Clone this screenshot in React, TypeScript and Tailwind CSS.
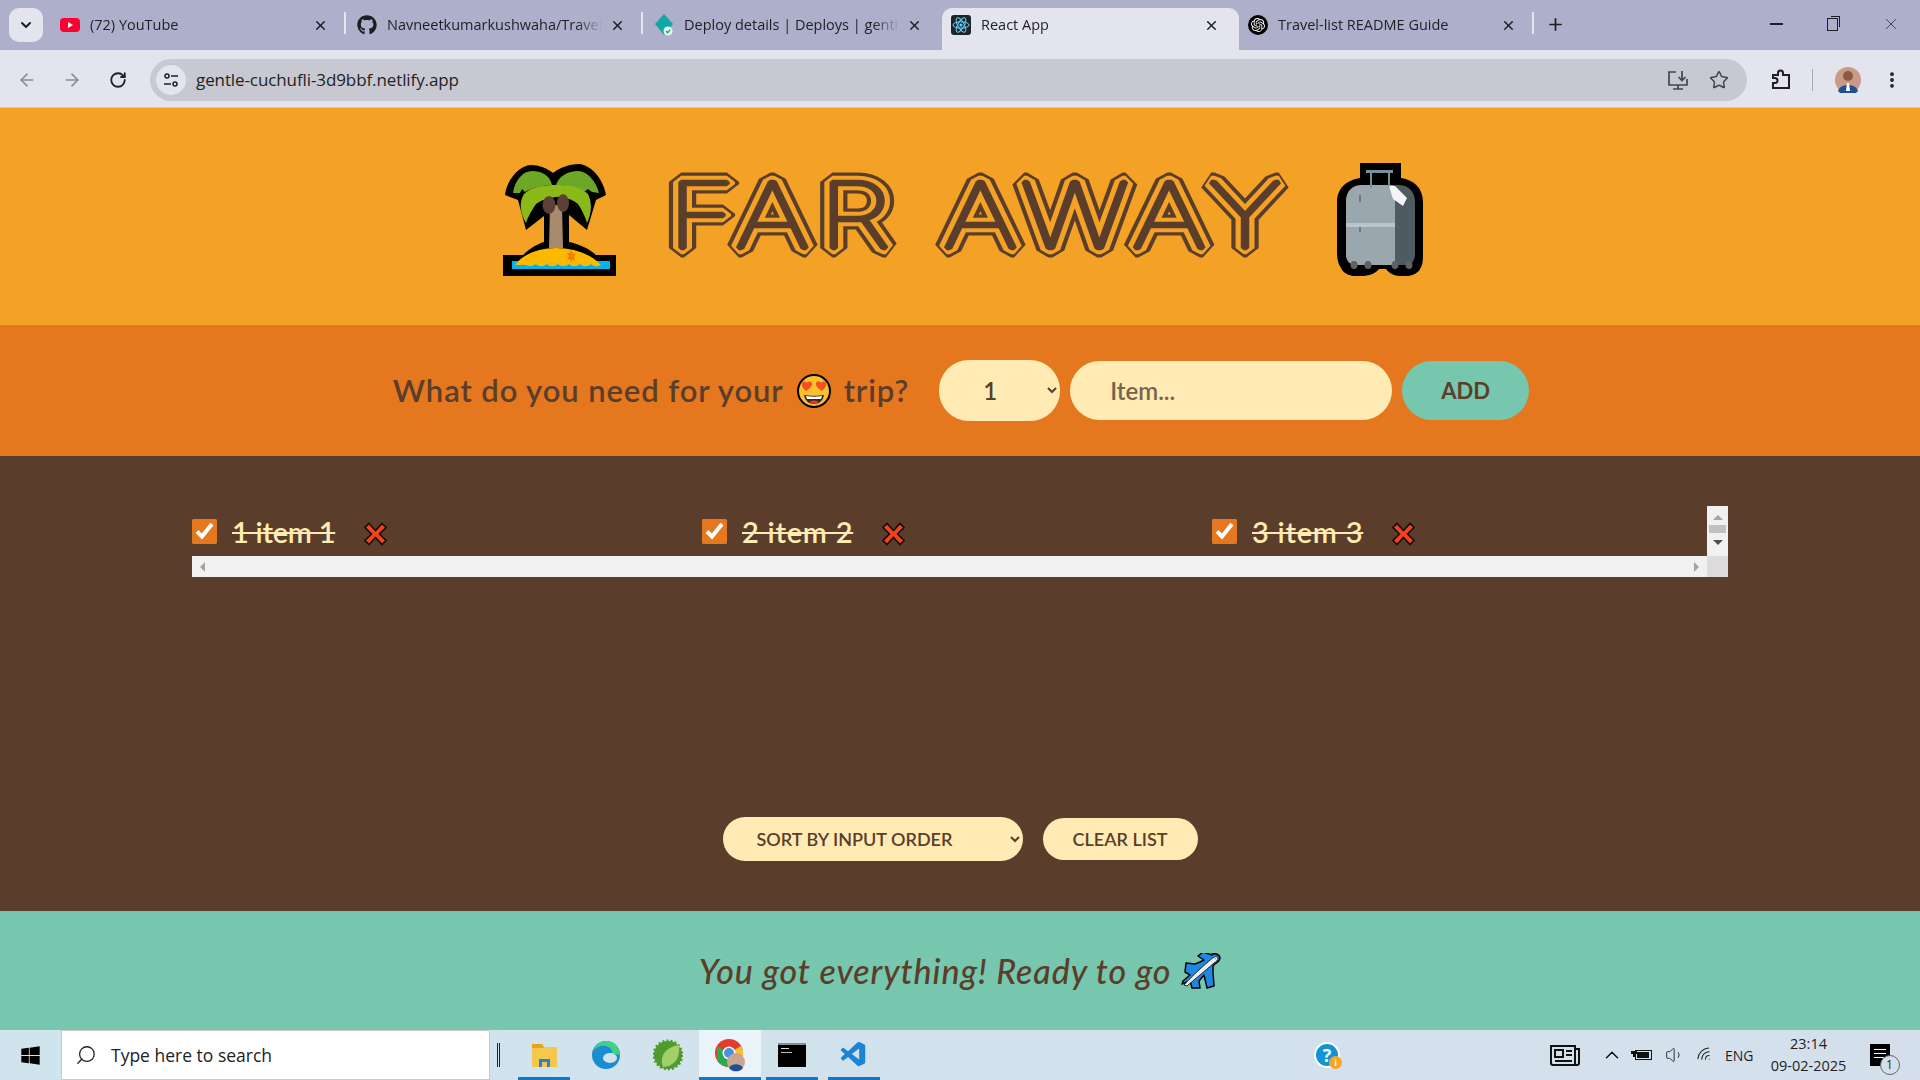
import { ReactNode } from 'react';
import { ArrowLeft, ArrowRight, ChevronDown, ChevronUp, EllipsisVertical, Plus, RotateCw, Search, Star, Volume1, Wifi, X } from 'lucide-react';
import { FaGithub, FaWindows } from 'react-icons/fa';
import { SiOpenai } from 'react-icons/si';
import { VscVscode } from 'react-icons/vsc';

const YoutubeIcon = () => (
  <svg width="20" height="20" viewBox="0 0 20 20">
    <rect y="3" width="20" height="14" rx="4" fill="#ff0033" />
    <path d="M8 7l5 3-5 3z" fill="#fff" />
  </svg>
);

const NetlifyIcon = () => (
  <svg width="20" height="24" viewBox="0 0 20 24">
    <path d="M10 1l9 10-9 11-9-11z" fill="#14a6a0" />
    <circle cx="14" cy="18" r="4.5" fill="#e3f5ee" />
    <path d="M12 18l1.6 1.6 2.6-3" fill="none" stroke="#2ca35c" strokeWidth="1.4" />
  </svg>
);

const ReactIcon = () => (
  <svg width="20" height="20" viewBox="0 0 20 20">
    <rect width="20" height="20" rx="3" fill="#20232a" />
    <g fill="none" stroke="#61dafb" strokeWidth="1">
      <ellipse cx="10" cy="10" rx="8" ry="3.2" />
      <ellipse cx="10" cy="10" rx="8" ry="3.2" transform="rotate(60 10 10)" />
      <ellipse cx="10" cy="10" rx="8" ry="3.2" transform="rotate(120 10 10)" />
    </g>
    <circle cx="10" cy="10" r="1.6" fill="#61dafb" />
  </svg>
);

const GptIcon = () => (
  <span className="flex h-5 w-5 items-center justify-center rounded-full bg-black text-white">
    <SiOpenai size={14} />
  </span>
);

const Tab = ({ icon, title, active, sep }: { icon: ReactNode; title: string; active?: boolean; sep?: boolean }) => (
  <div className={`relative flex h-[42px] w-[297px] shrink-0 items-center pb-[8px] pl-[9px] pr-[20px] ${active ? 'rounded-t-[10px] bg-[#e3e4ee]' : ''}`}>
    <span className="flex w-5 shrink-0 justify-center">{icon}</span>
    <span className="ml-[10px] flex-1 overflow-hidden whitespace-nowrap text-[14.5px] text-[#1f1f24] [mask-image:linear-gradient(to_right,black_88%,transparent)]">{title}</span>
    <X size={15} strokeWidth={2.4} className="ml-2 shrink-0 text-[#1f1f24]" />
    {sep && <span className="absolute right-[2px] top-[4px] h-[22px] w-[2px] bg-[#e3e4ee]" />}
  </div>
);

const ChromeBar = () => (
  <div className="font-['Open_Sans',sans-serif]">
    <div className="flex h-[50px] items-end bg-[#aeb0cb]">
      <div className="mb-2 ml-[9px] mr-[8px] flex h-[34px] w-[34px] items-center justify-center rounded-[10px] bg-[#e3e4ee]">
        <ChevronDown size={16} strokeWidth={3} className="text-[#1f1f24]" />
      </div>
      <Tab icon={<YoutubeIcon />} title="(72) YouTube" sep />
      <Tab icon={<FaGithub size={20} className="text-[#1b1f24]" />} title="Navneetkumarkushwaha/Travel-list" sep />
      <Tab icon={<NetlifyIcon />} title="Deploy details | Deploys | gentle-cuchufli" />
      <Tab icon={<ReactIcon />} title="React App" active />
      <Tab icon={<GptIcon />} title="Travel-list README Guide" sep />
      <Plus size={19} strokeWidth={2.2} className="mb-[16px] ml-[10px] text-[#1f1f24]" />
      <div className="mb-[17px] ml-auto flex items-center text-[#1f1f24]">
        <span className="mr-[44px] h-[1.5px] w-[13px] bg-[#1f1f24]" />
        <span className="relative mr-[44px] h-[13px] w-[11px] border border-[#1f1f24]">
          <span className="absolute -right-[3px] -top-[3px] h-[11px] w-[9px] border-r border-t border-[#1f1f24]" />
        </span>
        <X size={18} strokeWidth={1} className="mr-[20px]" />
      </div>
    </div>
    <div className="flex h-[58px] items-center border-b border-[#c9cad4] bg-[#e3e4ee] pt-[2px]">
      <ArrowLeft size={20} strokeWidth={2} className="ml-[17px] text-[#8a8b93]" />
      <ArrowRight size={20} strokeWidth={2} className="ml-[25px] text-[#8a8b93]" />
      <RotateCw size={18} strokeWidth={2.4} className="ml-[27px] text-[#1f1f24]" />
      <div className="ml-[23px] flex h-[42px] w-[1597px] items-center rounded-full bg-[#c7c8d2] pl-[6px] pr-[18px]">
        <span className="flex h-[30px] w-[30px] items-center justify-center rounded-full bg-[#e3e4ee]">
          <svg width="16" height="16" viewBox="0 0 16 16" fill="none" stroke="#1f1f24" strokeWidth="1.5">
            <circle cx="4" cy="4" r="2" />
            <path d="M8 4h7M1 12h7" />
            <circle cx="12" cy="12" r="2" />
          </svg>
        </span>
        <span className="ml-[10px] text-[17px] tracking-[-0.1px] text-[#1f1f24]">gentle-cuchufli-3d9bbf.netlify.app</span>
        <svg className="ml-auto" width="24" height="24" viewBox="0 0 24 24" fill="none" stroke="#44454c" strokeWidth="1.7">
          <path d="M10 4H3v13h18v-6M7 21h10M12 17v4" />
          <path d="M16 3v9M12.5 9l3.5 3.5L19.5 9" />
        </svg>
        <Star size={20} strokeWidth={1.8} className="ml-[19px] text-[#44454c]" />
      </div>
      <svg className="ml-[22px]" width="24" height="24" viewBox="0 0 24 24" fill="none" stroke="#1f1f24" strokeWidth="2">
        <path d="M4 7h5V5a2.5 2.5 0 015 0v2h6v13H4v-5h2a2.5 2.5 0 000-5H4z" />
      </svg>
      <span className="ml-[19px] h-[22px] w-[1px] bg-[#a9aab5]" />
      <svg className="ml-[22px]" width="26" height="26" viewBox="0 0 26 26">
        <circle cx="13" cy="13" r="13" fill="#c99b86" />
        <circle cx="13" cy="9" r="5" fill="#8a5a45" />
        <path d="M3 24c2-8 18-8 20 0a13 13 0 01-20 0z" fill="#1f4f96" />
        <path d="M12 16h2l1 8h-4z" fill="#fff" />
      </svg>
      <EllipsisVertical size={20} strokeWidth={2.6} className="ml-[21px] text-[#1f1f24]" />
    </div>
  </div>
);

const PalmIcon = () => (
  <svg width="113" height="113" viewBox="0 0 113 113" className="shrink-0">
    <path d="M0 113V92h20c8-8 15-11 21-13V53l-18 14-8-30-13-5C4 15 18 2 28 2c8 0 16 3 22 8 6-5 16-9 26-9 12 1 24 14 27 31l-10 5-9 30-18-15v27c10 2 19 6 27 13h20v21z" fill="#000" />
    <path d="M9 98h98v8H9z" fill="#00b4ef" />
    <path d="M12 102c8-11 24-17 41-17 18 0 35 6 45 17-4 2-7 2-10-1-4 3-8 3-11 0-4 3-8 3-11 0-4 3-8 3-11 0-4 3-8 3-11 0-4 3-8 3-11 0-3 2-6 3-10 1z" fill="#fcb900" />
    <path d="M47 42h12l1 43H46z" fill="#a88a6f" />
    <path d="M10 30C12 17 20 8 29 8c9 0 18 4 20 14-10 0-20 3-27 7l-3-3-2 4zM53 22c3-9 12-14 22-14 9 0 18 10 21 22l-7-1-4-3-4 3c-7-4-18-7-28-7z" fill="#6ca727" />
    <path d="M23 60c-6-10-7-21-2-29 6-6 17-9 29-9h6c12 0 23 3 29 9 4 8 4 19-1 29-2-7-5-13-9-19-6-5-14-7-20-7s-15 2-22 7c-4 6-8 12-10 19z" fill="#8bb919" />
    <ellipse cx="46" cy="42" rx="6.500" ry="9" fill="#5d4037" />
    <ellipse cx="60" cy="40" rx="6" ry="9" fill="#5d4037" />
    <path d="M68 87l2 4 3-1-2 4 1 4-3-2-1 4-1-4-3 1 2-4-2-3 3 0z" fill="#f57c00" />
  </svg>
);

const LuggageIcon = () => (
  <svg width="86" height="113" viewBox="0 0 86 113" className="shrink-0">
    <path d="M23 0h41v15c13 2 22 10 22 24v50c0 7 0 13-3 17-3 6-12 8-20 7-6 0-11-3-14-7h-7c-4 5-11 7-17 7-9 1-18-1-21-8-3-4-4-10-4-16V39C0 25 10 17 23 15z" fill="#000" />
    <path d="M9 39c0-11 6-17 17-17h35c10 0 17 6 17 17v52c0 7-4 11-10 11H19c-6 0-10-4-10-11z" fill="#4f5b62" />
    <path d="M9 39c0-11 6-17 17-17h28c3 0 4 2 4 5v70c0 3-1 5-4 5H19c-6 0-10-4-10-11z" fill="#9aa7ad" />
    <path d="M9 60h49v4H9z" fill="#b9c5ca" />
    <path d="M29 7h27v3h-3v15h-2V10H35v15h-2V10h-4z" fill="#78909c" />
    <path d="M52 23l6 0 12 12-4 8-10-7z" fill="#f5f5f5" />
    <path d="M22 32h2v7h-2zM22 64h2v5h-2z" fill="#607d8b" />
    <g fill="#616161">
      <ellipse cx="17" cy="102" rx="3.500" ry="4" />
      <ellipse cx="31" cy="102" rx="3.500" ry="4" />
      <ellipse cx="58" cy="102" rx="3.500" ry="4" />
      <ellipse cx="72" cy="102" rx="3.500" ry="4" />
    </g>
  </svg>
);

const HeartEyes = () => (
  <svg width="34" height="34" viewBox="0 0 34 34" className="mx-[13px] inline-block align-[-6px]">
    <circle cx="17" cy="17" r="16" fill="#fbc02d" stroke="#000" strokeWidth="2" />
    <path d="M9 17c-3-3-5-5-4-8 1-2 4-2 5 0 1-2 4-2 5 0 1 3-3 6-6 8zM25 17c-3-2-7-5-6-8 1-2 4-2 5 0 1-2 4-2 5 0 1 3-1 5-4 8z" fill="#f4511e" />
    <path d="M7 21c6 1 14 1 20 0-1 6-5 9-10 9s-9-3-10-9z" fill="#3e2723" />
    <path d="M9 22c5 1 11 1 16 0l-1 3H10z" fill="#fff" />
    <ellipse cx="17" cy="28" rx="4" ry="1.6" fill="#e53935" />
  </svg>
);

const PlaneIcon = () => (
  <svg width="40" height="36" viewBox="0 0 40 36" className="ml-[10px] inline-block align-[-8px]">
    <path d="M31 1c4-1 8 1 8 4 0 2-2 4-5 6l-2 2v6l1 14-7 2-3-13-5 6 1 7-8 0-2-7-8 3 1-3 7-6-5-3 1-9 9 1 5-2 4-2-6-4 5-4 9 3z" fill="#1e88e5" stroke="#000" strokeWidth="1.5" strokeLinejoin="round" />
    <path d="M3 32C12 22 24 11 33 4c2-1 4 0 4 1 0 2-2 4-4 5C24 18 14 26 6 33z" fill="#eceff1" stroke="#000" strokeWidth="0.8" />
    <path d="M33 5l2 0-1 2z" fill="#4fc3f7" />
  </svg>
);

const RedCross = () => (
  <svg width="23" height="24" viewBox="0 0 23 24">
    <path d="M5 1.5l6.5 7 6.500-7 4 4-6.500 6.500 6.500 6.500-4 4-6.500-7-6.500 7-4-4 6.500-6.500-6.500-6.500z" fill="#f4421e" stroke="#1a0d08" strokeWidth="1.600" />
  </svg>
);

// Monoton isn't installed, so the line effect comes from stacked strokes on real text
const titleLayers = [
  { color: '#5a3e2b', width: 19 },
  { color: '#f4a226', width: 12.5 },
  { color: '#5a3e2b', width: 4.5 },
];

const Header = () => (
  <header className="flex h-[217px] items-center justify-center bg-[#f4a226] pl-[6px] pt-[6px]">
    <PalmIcon />
    <h1 className="ml-[54px] mr-[49px] h-[82px] w-[618px] shrink-0">
      <svg width="618" height="82" viewBox="0 0 618 82" className="overflow-visible">
        <g transform="scale(1.3 1)" className="font-['Inter',sans-serif] text-[90px] font-thin tracking-[7.2px]">
          {titleLayers.map((layer) => (
            <text key={layer.width} x="-1.5" y="69" fill="none" stroke={layer.color} strokeWidth={layer.width} strokeLinejoin="bevel">
              FAR AWAY
            </text>
          ))}
        </g>
      </svg>
    </h1>
    <LuggageIcon />
  </header>
);

const Form = () => (
  <form className="flex h-[131px] items-center justify-center bg-[#e5771f] pl-[2px] text-[#5a3e2b]">
    <h3 className="mr-[30px] whitespace-nowrap text-[31px] font-semibold tracking-[0.9px]">
      What do you need for your
      <HeartEyes />
      trip?
    </h3>
    <select defaultValue="1" className="h-[61px] w-[121px] rounded-[30px] bg-[#ffebb3] pl-[40px] text-[24px] font-semibold text-[#5a3e2b]">
      <option value="1">1</option>
    </select>
    <input placeholder="Item..." className="ml-[10px] h-[59px] w-[322px] rounded-full bg-[#ffebb3] px-[40px] text-[24px] font-semibold text-[#5a3e2b] outline-none placeholder:text-[#75654f]" />
    <button type="button" className="ml-[10px] h-[59px] w-[127px] rounded-full bg-[#76c7ad] text-[22px] font-bold uppercase text-[#5a3e2b]">Add</button>
  </form>
);

const Item = ({ label, spacing }: { label: string; spacing: string }) => (
  <li className="flex w-[510px] shrink-0 items-center">
    <input type="checkbox" defaultChecked className="h-[25px] w-[25px] accent-[#e5771f]" />
    <span className={`ml-[15px] text-[29px] font-semibold text-[#ffebb3] line-through ${spacing}`}>{label}</span>
    <span className="ml-[29px] mt-[4px]"><RedCross /></span>
  </li>
);

const PackingList = () => (
  <section className="flex h-[455px] flex-col items-center justify-between bg-[#5a3e2b] pb-[50px] pt-[50px]">
    <div className="w-[1536px]">
      <div className="flex h-[50px]">
        <ul className="flex min-w-0 flex-1 items-start overflow-hidden pt-[4px]">
          <Item label="1 item 1" spacing="tracking-[-0.25px]" />
          <Item label="2 item 2" spacing="tracking-[0.75px]" />
          <Item label="3 item 3" spacing="tracking-[0.75px]" />
        </ul>
        <div className="flex w-[21px] shrink-0 flex-col items-center bg-[#f1f1f1] pt-[9px]">
          <span className="h-0 w-0 border-x-[5px] border-b-[5px] border-x-transparent border-b-[#a3a3a3]" />
          <span className="mt-[5px] h-[8px] w-[17px] bg-[#c1c1c1]" />
          <span className="mt-[7px] h-0 w-0 border-x-[5px] border-t-[5px] border-x-transparent border-t-[#505050]" />
        </div>
      </div>
      <div className="flex h-[21px]">
        <div className="flex flex-1 items-center justify-between bg-[#f1f1f1] px-[8px]">
          <span className="h-0 w-0 border-y-[5px] border-r-[5px] border-y-transparent border-r-[#a3a3a3]" />
          <span className="h-0 w-0 border-y-[5px] border-l-[5px] border-y-transparent border-l-[#a3a3a3]" />
        </div>
        <div className="w-[21px] bg-[#dcdcdc]" />
      </div>
    </div>
    <div className="flex items-center text-[18px] font-semibold uppercase text-[#5a3e2b]">
      <select defaultValue="input" className="h-[44px] w-[300px] rounded-full bg-[#ffebb3] pl-[30px] uppercase">
        <option value="input">Sort by input order</option>
      </select>
      <button type="button" className="ml-[20px] h-[42px] w-[155px] rounded-full bg-[#ffebb3] uppercase">Clear list</button>
    </div>
  </section>
);

const Stats = () => (
  <footer className="flex h-[119px] items-center justify-center bg-[#76c7ad] text-[34px] font-medium italic tracking-[0.9px] text-[#5a3e2b]">
    You got everything! Ready to go
    <PlaneIcon />
  </footer>
);

const TaskIcon = ({ children, active, running = true }: { children: ReactNode; active?: boolean; running?: boolean }) => (
  <div className={`relative flex h-[50px] w-[62px] items-center justify-center ${active ? 'bg-[#e9f3f8]' : ''}`}>
    {children}
    {running && <span className={`absolute bottom-0 h-[3px] bg-[#0b78d1] ${active ? 'inset-x-0' : 'inset-x-[5px]'}`} />}
  </div>
);

const Taskbar = () => (
  <div className="flex h-[50px] items-center bg-[linear-gradient(to_right,#cfe4ed,#d2e2ec_50%,#d5dfec)] font-['Open_Sans',sans-serif] text-[#1f1f24]">
    <FaWindows size={21} className="ml-[20px] shrink-0 text-black" />
    <div className="ml-[20px] flex h-[50px] w-[429px] shrink-0 items-center border border-[#c9c9c9] bg-white">
      <Search size={22} strokeWidth={1.4} className="ml-[13px] -scale-x-100 text-[#222]" />
      <span className="ml-[14px] text-[17.5px] text-[#222]">Type here to search</span>
    </div>
    <span className="ml-[7px] h-[24px] w-[3px] shrink-0 border-x border-[#222]" />
    <div className="ml-[13px] flex shrink-0">
      <TaskIcon>
        <svg width="29" height="24" viewBox="0 0 29 24">
          <path d="M2 1h10l3 3h12v20H2z" fill="#f5c74d" />
          <path d="M2 1h10l2 4H2z" fill="#e5a21a" />
          <path d="M9 24v-8h11v8h-3v-5h-5v5z" fill="#2b7fd8" />
        </svg>
      </TaskIcon>
      <TaskIcon running={false}>
        <svg width="30" height="30" viewBox="0 0 30 30">
          <circle cx="15" cy="15" r="14" fill="#1a8ccf" />
          <path d="M29 15c0-8-6-14-14-14C9 1 4 5 2 11c3-4 8-6 12-5 6 1 8 5 7 8z" fill="#3fd08a" />
          <ellipse cx="19" cy="18" rx="7" ry="5" fill="#d2e2ec" />
        </svg>
      </TaskIcon>
      <TaskIcon running={false}>
        <svg width="30" height="32" viewBox="0 0 30 32">
          <circle cx="15" cy="16" r="14" fill="#4f9b2f" stroke="#4f9b2f" strokeWidth="3" strokeDasharray="2 2" />
          <path d="M10 28C6 18 12 8 26 6c1 12-3 21-16 22z" fill="#a3cf6a" />
        </svg>
      </TaskIcon>
      <TaskIcon active>
        <svg width="32" height="34" viewBox="0 0 32 34">
          <circle cx="15" cy="15" r="14" fill="#e33b2e" />
          <path d="M15 15L3 22a14 14 0 0 0 12 7z" fill="#2da94f" />
          <path d="M15 15l12-7a14 14 0 0 1-4 19z" fill="#fbc02d" />
          <path d="M15 15L3 8v14a14 14 0 0 0 5 5z" fill="#2da94f" />
          <circle cx="15" cy="15" r="6.500" fill="#fff" />
          <circle cx="15" cy="15" r="5" fill="#4a90e2" />
          <circle cx="22" cy="24" r="9" fill="#c9a68f" />
          <path d="M15 30c2-5 12-5 14 0a9 9 0 0 1-14 0z" fill="#1f4f96" />
        </svg>
      </TaskIcon>
      <TaskIcon>
        <div className="h-[24px] w-[28px] border-t-[2px] border-[#8b8f93] bg-black pl-[3px] pt-[3px]">
          <span className="block h-[1px] w-[8px] bg-[#ddd]" />
          <span className="mt-[3px] block h-[1px] w-[11px] bg-[#bbb]" />
        </div>
      </TaskIcon>
      <TaskIcon>
        <VscVscode size={30} className="text-[#1b85d4]" />
      </TaskIcon>
    </div>
    <div className="relative ml-[429px] flex h-[26px] w-[26px] shrink-0 items-center justify-center rounded-full border-[2px] border-white bg-[#1193d8] text-[18px] font-bold text-white">
      ?
      <span className="absolute -bottom-[3px] -right-[4px] flex h-[13px] w-[13px] items-center justify-center rounded-full bg-[#f5a623] text-[9px]">i</span>
    </div>
    <svg className="ml-[210px] shrink-0" width="30" height="24" viewBox="0 0 30 24" fill="none" stroke="#111" strokeWidth="2">
      <path d="M1 3h24v19H3a2 2 0 0 1-2-2zM25 6h4v14a2 2 0 0 1-2 2h-2" />
      <rect x="5" y="7" width="8" height="7" />
      <path d="M16 8h6M16 12h6M5 18h17" />
    </svg>
    <ChevronUp size={22} strokeWidth={1.6} className="ml-[21px] shrink-0 text-[#111]" />
    <svg className="ml-[8px] shrink-0" width="22" height="16" viewBox="0 0 22 16">
      <rect x="4.500" y="3.500" width="16" height="9" fill="none" stroke="#111" />
      <rect x="6" y="5" width="12" height="6" fill="#111" />
      <path d="M0 4h6v3H4v3H2V7H0z" fill="#111" />
    </svg>
    <Volume1 size={20} strokeWidth={1.1} className="ml-[12px] shrink-0 text-[#222]" />
    <Wifi size={18} strokeWidth={1.4} className="ml-[11px] shrink-0 -rotate-45 text-[#222]" />
    <span className="ml-[11px] text-[14px]">ENG</span>
    <div className="ml-[14px] flex w-[82px] shrink-0 flex-col items-center text-[14.5px] leading-[22px]">
      <span>23:14</span>
      <span>09-02-2025</span>
    </div>
    <div className="relative ml-[20px] h-[22px] w-[20px] shrink-0 bg-black">
      <span className="absolute left-[4px] top-[5px] h-[1px] w-[12px] bg-white" />
      <span className="absolute left-[4px] top-[9px] h-[1px] w-[12px] bg-white" />
      <span className="absolute left-[4px] top-[13px] h-[1px] w-[12px] bg-white" />
      <span className="absolute -bottom-[9px] -right-[10px] flex h-[20px] w-[20px] items-center justify-center rounded-full border border-[#666] bg-[#d5dfec] text-[12px]">1</span>
    </div>
  </div>
);

export default function App() {
  return (
    <div className="flex h-[1080px] w-[1920px] flex-col overflow-hidden bg-[#5a3e2b] font-['Lato',sans-serif]">
      <ChromeBar />
      <Header />
      <Form />
      <PackingList />
      <Stats />
      <Taskbar />
    </div>
  );
}
